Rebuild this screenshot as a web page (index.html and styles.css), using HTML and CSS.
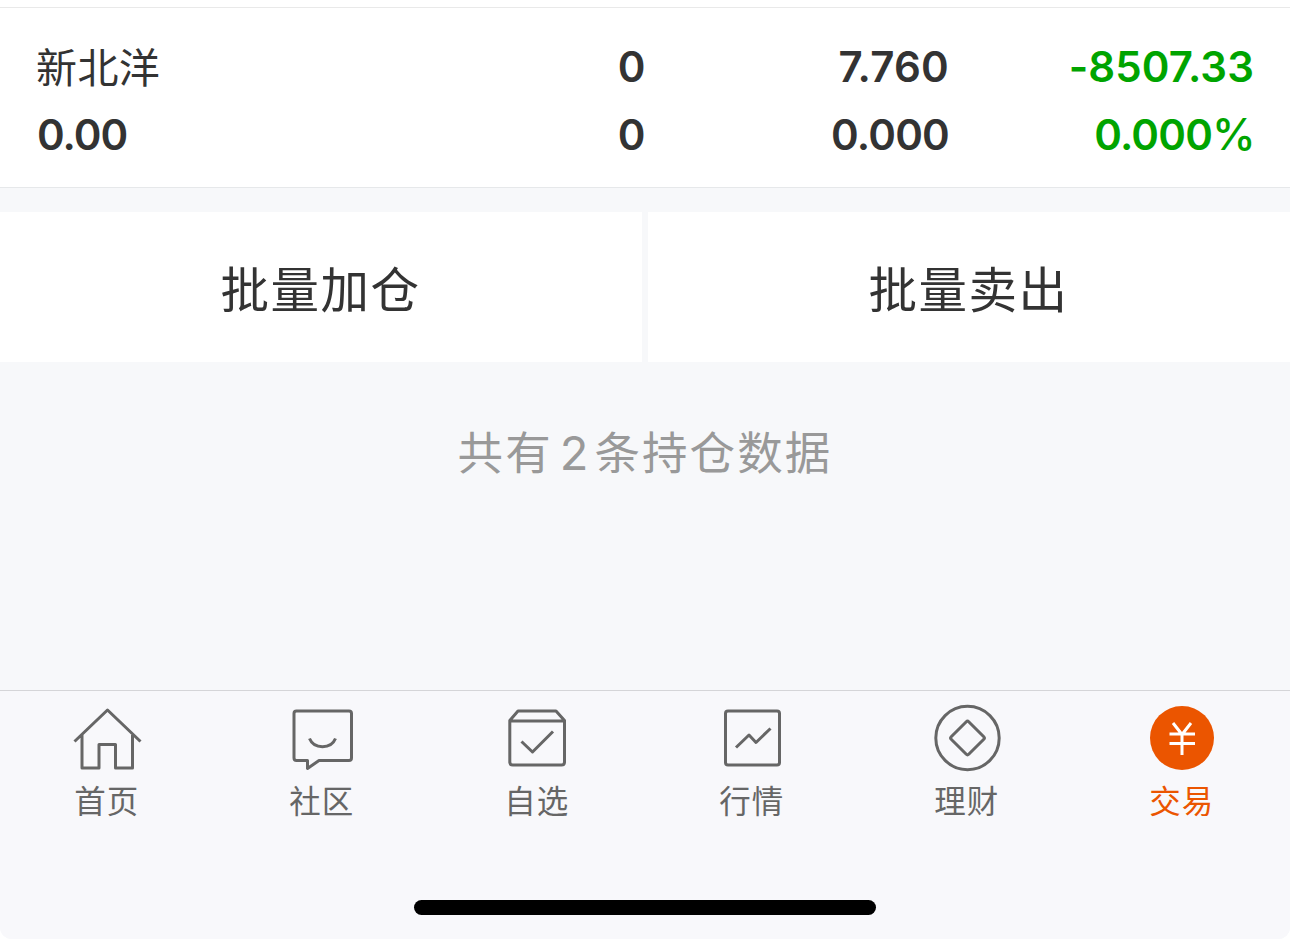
FILE: index.html
```html
<!DOCTYPE html>
<html lang="zh-CN">
<head>
<meta charset="utf-8">
<title>持仓</title>
<link rel="stylesheet" href="styles.css">
</head>
<body>
<div class="screen">
  <section class="holding">
    <div class="row">
      <span class="name">新北洋</span><span class="num">0</span><span class="num price">7.760</span><span class="num down profit">-8507.33</span>
    </div>
    <div class="row">
      <span class="num tight value">0.00</span><span class="num">0</span><span class="num tight">0.000</span><span class="num tight down">0.000<span class="pct">%</span></span>
    </div>
  </section>
  <div class="actions">
    <button class="action">批量加仓</button>
    <button class="action">批量卖出</button>
  </div>
  <p class="summary">共有<span class="count">2</span>条持仓数据</p>
  <nav class="tabs">
    <a class="tab">
      <svg class="icon" viewBox="0 0 72 72"><path d="M3.500 38.500 36.500 7 69.500 38.500M11 32V65H28V41.500H44.500V65H61.500V32"/></svg>
      <span class="label">首页</span>
    </a>
    <a class="tab">
      <svg class="icon" viewBox="0 0 72 72"><path d="M10.500 8H63Q65.500 8 65.500 10.500V55Q65.500 57.500 63 57.500H33L21.500 65.500V57.500H10.500Q8 57.500 8 55V10.500Q8 8 10.500 8Z"/><path d="M23.500 35.500C28 46.500 45 46.500 49.500 35.500"/></svg>
      <span class="label">社区</span>
    </a>
    <a class="tab">
      <svg class="icon" viewBox="0 0 72 72"><path d="M8.800 17.500 17 8H55L63.500 17.500V59Q63.500 62 60.500 62H11.800Q8.800 62 8.800 59ZM8.800 18H63.500M20.500 38.500 31.500 49 52 28.500"/></svg>
      <span class="label">自选</span>
    </a>
    <a class="tab">
      <svg class="icon" viewBox="0 0 72 72"><rect x="9.500" y="8" width="54" height="54" rx="2.500"/><path d="M20 44.500 33 32 40 39.500 54.500 25.500"/></svg>
      <span class="label">行情</span>
    </a>
    <a class="tab">
      <svg class="icon" viewBox="0 0 72 72"><circle cx="36.500" cy="35" r="31.700"/><path d="M35.300 18.700Q36.500 17.500 37.700 18.700L52.800 33.800Q54 35 52.800 36.200L37.700 51.300Q36.500 52.500 35.300 51.300L20.200 36.200Q19 35 20.200 33.800Z"/></svg>
      <span class="label">理财</span>
    </a>
    <a class="tab active">
      <svg class="icon" viewBox="0 0 72 72"><circle class="disc" cx="36" cy="35" r="32"/><path class="yen" d="M27 20 36 31.500 45 20M23.500 31H49M23.500 40.500H49M36 31V52"/></svg>
      <span class="label">交易</span>
    </a>
  </nav>
  <div class="home"><div class="home-bar"></div></div>
</div>
</body>
</html>
```
FILE: styles.css
```css
* { box-sizing: border-box; }
body { margin: 0; background: #fff; font-family: Inter, "Noto Sans CJK SC", sans-serif; color: #333; }
.screen { height: 939px; display: flex; flex-direction: column; background: #f7f8fa; border-radius: 0 0 12px 12px; overflow: hidden; }
.holding { height: 188px; padding-top: 25px; background: #fff; border-bottom: 1px solid #e6e8ea; }
.holding::before { content: ""; display: block; height: 1px; margin-top: -18px; margin-bottom: 25px; background: #e9e9e9; }
.row { display: grid; grid-template-columns: 343.500px 302px 303.500px 1fr; height: 68px; padding-right: 36px; line-height: 68px; }
.row > * { text-align: right; white-space: nowrap; }
.row > :first-child { text-align: left; padding-left: 36px; }
.row > .name { padding-top: 1px; font-size: 41px; letter-spacing: .4px; }
.row > .value { padding-left: 37px; }
.num { font-size: 42px; font-weight: 600; }
.price { letter-spacing: .2px; }
.profit { letter-spacing: .1px; }
.tight { letter-spacing: -.8px; }
.value { letter-spacing: -1px; }
.down { color: #00a400; }
.pct { margin-right: -1px; font-size: 44px; line-height: 1; font-weight: 500; }
.actions { display: flex; gap: 6px; height: 150px; margin-top: 24px; }
.action { flex: 1; border: 0; padding: 0 1px 0 0; background: #fff; color: #333; font: 400 48.500px/1 "Noto Sans CJK SC", sans-serif; letter-spacing: 1.500px; }
.summary { margin: 56px 0 0; height: 70px; line-height: 70px; text-align: center; color: #999; font-size: 45.500px; letter-spacing: 2.100px; }
.count { margin: 0 6px 0 7px; font-size: 47px; letter-spacing: 0; }
.tabs { display: flex; height: 150px; margin-top: auto; border-top: 1px solid #d5d5d8; background: #f8f8fb; }
.tab { flex: 1; display: flex; flex-direction: column; align-items: center; padding: 12px 1.500px 0 0; color: #666; }
.icon { width: 72px; height: 72px; fill: none; stroke: currentColor; stroke-width: 3; stroke-linejoin: round; }
.label { height: 46px; margin-top: 4px; line-height: 46px; font-size: 31.500px; letter-spacing: 1px; }
.active { color: #eb5500; }
.disc { fill: currentColor; stroke: none; }
.yen { stroke: #fff; }
.home { height: 99px; padding-top: 60px; background: #f8f8fb; }
.home-bar { width: 462px; height: 15px; margin: 0 auto; border-radius: 8px; background: #000; }
```
